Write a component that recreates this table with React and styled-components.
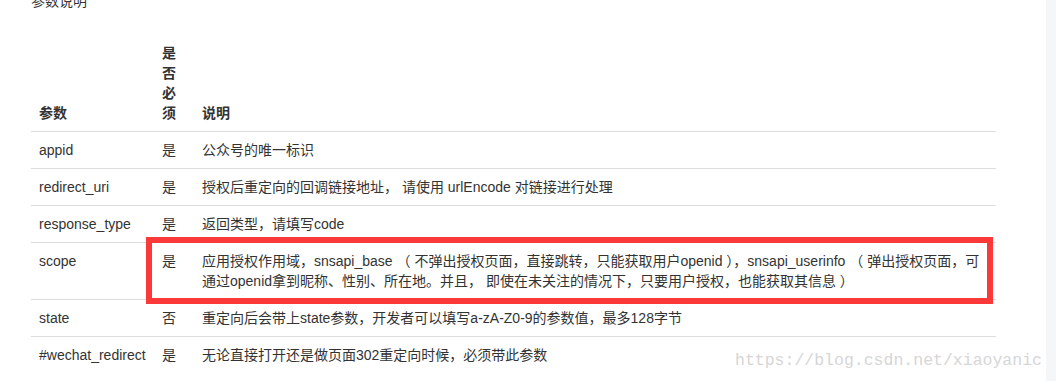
import React from "react";
import styled, { createGlobalStyle } from "styled-components";

const GlobalStyle = createGlobalStyle`
  html, body {
    margin: 0;
    padding: 0;
    background: #fff;
    overflow: hidden;
  }
  body {
    font-family: "Liberation Sans", "Noto Sans CJK SC", sans-serif;
    font-size: 14px;
    color: #333;
  }
`;

const rows = [
  { name: "appid", must: "是", desc: "公众号的唯一标识" },
  {
    name: "redirect_uri",
    must: "是",
    desc: "授权后重定向的回调链接地址， 请使用 urlEncode 对链接进行处理",
  },
  { name: "response_type", must: "是", desc: "返回类型，请填写code" },
  {
    name: "scope",
    must: "是",
    desc: (
      <>
        应用授权作用域，snsapi_base （ 不弹出授权页面，直接跳转，只能获取用户openid
        ），snsapi_userinfo （ 弹出授权页面，可
        <br />
        通过openid拿到昵称、性别、所在地。并且， 即使在未关注的情况下，只要用户授权，也能获取其信息 ）
      </>
    ),
  },
  {
    name: "state",
    must: "否",
    desc: "重定向后会带上state参数，开发者可以填写a-zA-Z0-9的参数值，最多128字节",
  },
  {
    name: "#wechat_redirect",
    must: "是",
    desc: "无论直接打开还是做页面302重定向时候，必须带此参数",
  },
];

function App() {
  return (
    <Page>
      <GlobalStyle />
      <Main>
        <Title>参数说明</Title>
        <Table>
          <colgroup>
            <col style={{ width: 123 }} />
            <col style={{ width: 40 }} />
            <col />
          </colgroup>
          <thead>
            <tr>
              <Th>参数</Th>
              <Th>是否必须</Th>
              <Th>说明</Th>
            </tr>
          </thead>
          <tbody>
            {rows.map((row) => (
              <tr key={row.name}>
                <Td>{row.name}</Td>
                <Td>{row.must}</Td>
                <Td>{row.desc}</Td>
              </tr>
            ))}
          </tbody>
        </Table>
        <Highlight />
        <Watermark>https://blog.csdn.net/xiaoyanic</Watermark>
      </Main>
      <SideStrip />
    </Page>
  );
}

const Page = styled.div`
  display: flex;
  width: 1056px;
  height: 381px;
  overflow: hidden;
`;

const Main = styled.div`
  position: relative;
  flex: 1;
  min-width: 0;
  padding: 0 50px 0 31px;
`;

const SideStrip = styled.div`
  width: 10px;
  flex-shrink: 0;
  background: #f5f6f8;
`;

const Title = styled.div`
  margin-top: -9px;
  line-height: 20px;
  margin-bottom: 24px;
`;

const Table = styled.table`
  width: 965px;
  border-collapse: collapse;
  border-spacing: 0;
  table-layout: fixed;
`;

const Th = styled.th`
  padding: 8px;
  line-height: 20px;
  text-align: left;
  vertical-align: bottom;
  font-weight: bold;
  border-bottom: 1px solid #ddd;
  word-break: break-all;
`;

const Td = styled.td`
  padding: 8px;
  line-height: 20px;
  vertical-align: top;
  border-top: 1px solid #ddd;
`;

/* red annotation box drawn over the scope row */
const Highlight = styled.div`
  position: absolute;
  left: 146px;
  top: 237px;
  width: 847px;
  height: 67px;
  box-sizing: border-box;
  border: 6px solid #fb3939;
  pointer-events: none;
`;

const Watermark = styled.div`
  position: absolute;
  left: 735px;
  top: 351px;
  font-family: "Liberation Mono", monospace;
  font-size: 16.5px;
  color: #d6d6d6;
  white-space: nowrap;
`;

export default App;
